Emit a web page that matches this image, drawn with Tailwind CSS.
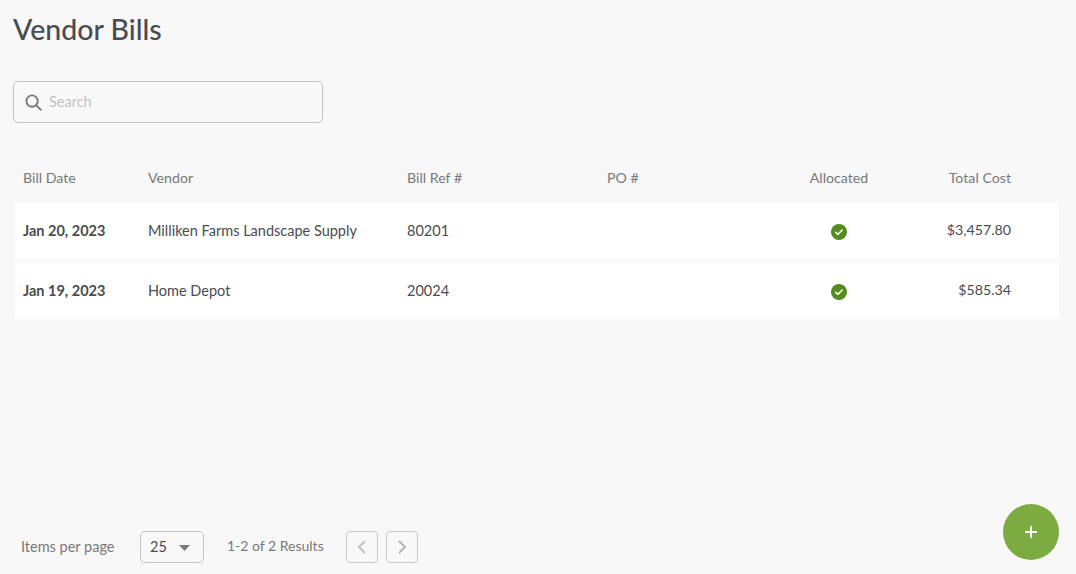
<!DOCTYPE html>
<html>
<head>
<meta charset="utf-8">
<script src="https://cdn.jsdelivr.net/npm/@tailwindcss/browser@4"></script>
<title>Vendor Bills</title>
</head>
<body class="bg-[#f8f8f8] font-['Lato','Noto_Sans',sans-serif] text-[#4a4c50]">
<div class="relative w-[1076px] h-[574px] overflow-hidden flex flex-col">
    <!-- title -->
    <h1 class="pl-[13px] pt-[13px] h-[81px] text-[28.5px] leading-[32px] font-medium text-[#4a4c50]">Vendor Bills</h1>

    <!-- search -->
    <div class="ml-[13px] w-[310px] h-[42px] border border-[#c4c4c4] rounded-[5px] flex items-center pl-[11px] gap-[7px]">
        <svg class="w-[17px] h-[17px] text-[#77797c]" viewBox="0 0 18 18" fill="none" stroke="currentColor" stroke-width="1.9">
            <circle cx="7.5" cy="7.5" r="6"/>
            <path d="M12 12L16.8 16.8" stroke-linecap="round"/>
        </svg>
        <span class="text-[14.5px] text-[#c2c2c2]">Search</span>
    </div>

    <!-- table head -->
    <div class="mt-[45px] h-[20px] mx-[15px] grid grid-cols-[133px_259px_200px_140px_184px_80px] items-center text-[14.2px] leading-[20px] text-[#77797c]">
        <div class="pl-[8px]">Bill Date</div>
        <div>Vendor</div>
        <div>Bill Ref #</div>
        <div>PO #</div>
        <div class="text-center">Allocated</div>
        <div class="text-right">Total Cost</div>
    </div>

    <!-- rows -->
    <div class="mt-[15px] mx-[15px] w-[1044px] flex flex-col gap-[4px]">
        <div class="h-[56px] bg-white grid grid-cols-[133px_259px_200px_140px_184px_80px] items-center text-[14.5px]">
            <div class="pl-[8px] font-bold">Jan 20, 2023</div>
            <div>Milliken Farms Landscape Supply</div>
            <div>80201</div>
            <div></div>
            <div class="flex justify-center pt-[1px]">
                <svg class="w-[16px] h-[16px]" viewBox="0 0 16 16"><circle cx="8" cy="8" r="8" fill="#558b1f"/><path d="M4.8 8.3L7 10.3L11.2 6" fill="none" stroke="#fff" stroke-width="1.6" stroke-linecap="round" stroke-linejoin="round"/></svg>
            </div>
            <div class="text-right text-[14.2px] leading-[20px] pb-[2px]">$3,457.80</div>
        </div>
        <div class="h-[56px] bg-white grid grid-cols-[133px_259px_200px_140px_184px_80px] items-center text-[14.5px]">
            <div class="pl-[8px] font-bold">Jan 19, 2023</div>
            <div>Home Depot</div>
            <div>20024</div>
            <div></div>
            <div class="flex justify-center pt-[1px]">
                <svg class="w-[16px] h-[16px]" viewBox="0 0 16 16"><circle cx="8" cy="8" r="8" fill="#558b1f"/><path d="M4.8 8.3L7 10.3L11.2 6" fill="none" stroke="#fff" stroke-width="1.6" stroke-linecap="round" stroke-linejoin="round"/></svg>
            </div>
            <div class="text-right text-[14.2px] leading-[20px] pb-[2px]">$585.34</div>
        </div>
    </div>

    <!-- pagination -->
    <div class="mt-auto mb-[11px] pl-[21px] h-[32px] flex items-center text-[14.5px] text-[#77797c]">
        <span class="w-[119px]">Items per page</span>
        <div class="w-[64px] h-[32px] border border-[#c4c4c4] rounded-[5px] flex items-center pl-[9px] text-[#4a4c50]">
            <span>25</span>
            <svg class="ml-[12px] mt-[2px] w-[11px] h-[6px]" viewBox="0 0 11 6"><path d="M0 0H11L5.5 6Z" fill="#77797c"/></svg>
        </div>
        <span class="ml-[23px] w-[119px] text-[14px] leading-[20px] pb-[3px]">1-2 of 2 Results</span>
        <div class="w-[32px] h-[32px] border border-[#c9c9c9] rounded-[4px] flex items-center justify-center">
            <svg class="w-[10px] h-[16px]" viewBox="0 0 10 16" fill="none" stroke="#c4c4c4" stroke-width="2"><path d="M8 2L2 8L8 14"/></svg>
        </div>
        <div class="ml-[8px] w-[32px] h-[32px] border border-[#c9c9c9] rounded-[4px] flex items-center justify-center">
            <svg class="w-[10px] h-[16px]" viewBox="0 0 10 16" fill="none" stroke="#b4b4b4" stroke-width="2"><path d="M2 2L8 8L2 14"/></svg>
        </div>
    </div>

    <!-- add button -->
    <button class="absolute left-[1003px] top-[504px] w-[56px] h-[56px] rounded-full bg-[#7cab41] flex items-center justify-center">
        <svg class="w-[14px] h-[14px]" viewBox="0 0 14 14" stroke="#fff" stroke-width="2"><path d="M7 1V13M1 7H13"/></svg>
    </button>
</div>
</body>
</html>
